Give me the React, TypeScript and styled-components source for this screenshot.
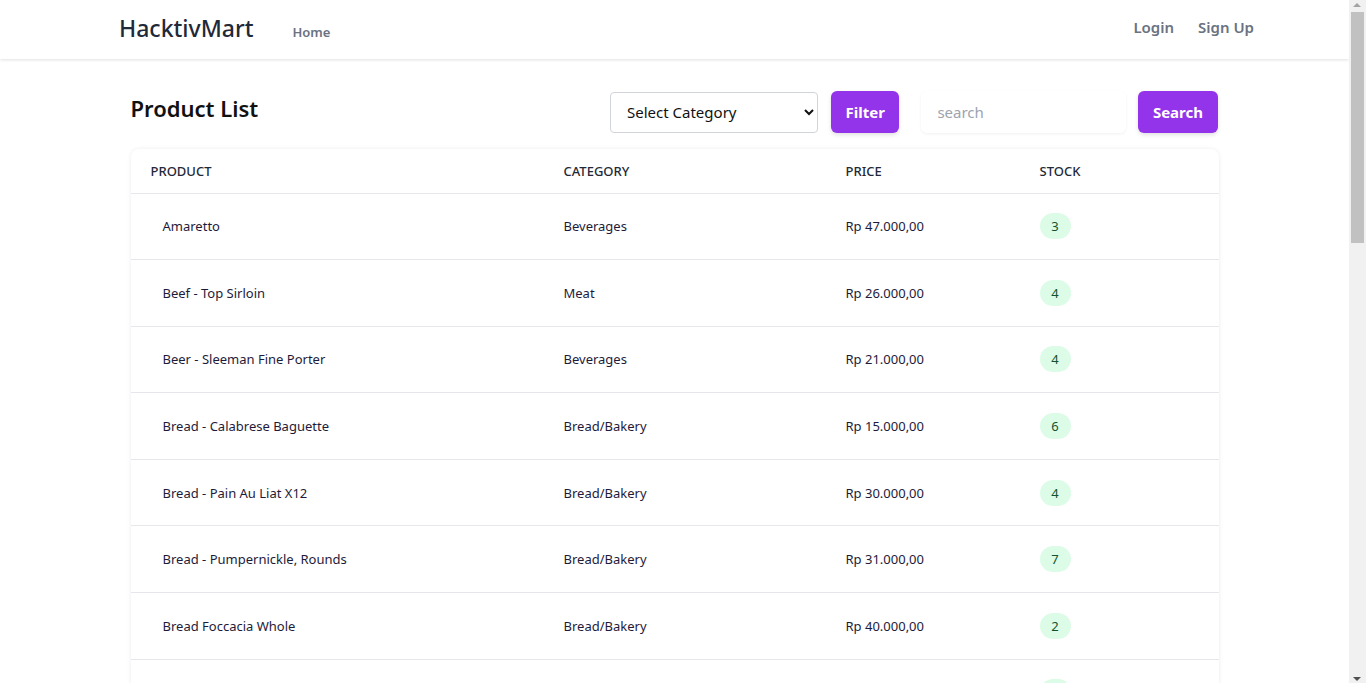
import styled, { createGlobalStyle } from 'styled-components';

const GlobalStyle = createGlobalStyle`
    html, body { overflow: hidden; }
    body {
        margin: 0;
        padding-right: 17px; /* room for the scrollbar drawn below */
        background: #ffffff;
        font-family: 'Noto Sans', 'Open Sans', sans-serif;
        color: #111827;
    }
    * { box-sizing: border-box; }
`;

const StyledScrollbar = styled.div`
    position: fixed;
    top: 0;
    right: 0;
    width: 17px;
    height: 100vh;
    background: #f1f1f1;
`;
const StyledThumb = styled.div`
    position: absolute;
    left: 2px;
    top: 12px;
    width: 13px;
    height: 231px;
    background: #c1c1c1;
`;
const StyledArrow = styled.div<{ $down?: boolean }>`
    position: absolute;
    left: 4px;
    width: 0;
    height: 0;
    border-left: 4.5px solid transparent;
    border-right: 4.5px solid transparent;
    ${(p) =>
        p.$down
            ? 'bottom: 2px; border-top: 4px solid #505050;'
            : 'top: 3px; border-bottom: 4px solid #a3a3a3;'}
`;

const StyledNav = styled.nav`
    height: 59px;
    background: #fff;
    box-shadow: 0 1px 3px rgba(0, 0, 0, 0.12);
    display: flex;
    align-items: center;
    padding: 0 95px 2px 119px;
`;
const StyledBrand = styled.a`
    font-size: 23px;
    font-weight: 500;
    color: #1f2937;
    text-decoration: none;
    margin-right: 39px;
    padding-bottom: 2px;
`;
const StyledNavLink = styled.a<{ $small?: boolean }>`
    font-size: ${(p) => (p.$small ? '13px' : '15px')};
    font-weight: 600;
    color: #6b7280;
    text-decoration: none;
    padding-top: ${(p) => (p.$small ? '6px' : '0')};
    padding-bottom: ${(p) => (p.$small ? '0' : '4px')};
`;
const StyledNavRight = styled.div`
    margin-left: auto;
    display: flex;
    gap: 24px;
`;

const StyledMain = styled.main`
    width: 1088px;
    margin: 0 auto;
    padding: 32px 0 40px;
`;
const StyledToolbar = styled.div`
    display: flex;
    align-items: center;
    padding-right: 1px;
    margin-bottom: 16px;
`;
const StyledH2 = styled.h2`
    margin: 0 auto 9px 0;
    font-size: 22px;
    font-weight: 600;
    color: #111;
`;
const StyledSelect = styled.select`
    width: 208px;
    height: 41px;
    border: 1px solid #d1d5db;
    border-radius: 4px;
    background: #fff;
    font-family: inherit;
    font-size: 15px;
    color: #111;
    padding: 0 8px 0 12px;
    margin-right: 13px;
`;
const StyledButton = styled.button`
    height: 42px;
    padding: 0 14.5px;
    border: none;
    border-radius: 6px;
    background: #9333ea;
    color: #fff;
    font-family: inherit;
    font-size: 15px;
    font-weight: 700;
    box-shadow: 0 2px 4px rgba(0, 0, 0, 0.12);
`;
const StyledInput = styled.input`
    width: 205px;
    height: 42px;
    margin: 0 12px 0 22px;
    border: none;
    border-radius: 6px;
    padding: 0 16px;
    font-family: inherit;
    font-size: 15px;
    box-shadow: 0 1px 3px rgba(0, 0, 0, 0.06);
    &::placeholder { color: #9ca3af; }
    &:focus { outline: none; }
`;
const StyledCard = styled.div`
    border-radius: 8px;
    background: #fff;
    box-shadow: 0 0 4px rgba(0, 0, 0, 0.08);
    overflow: hidden;
`;
const StyledTable = styled.table`
    width: 100%;
    border-collapse: collapse;
    table-layout: fixed;
`;
const StyledTh = styled.th<{ $w: number }>`
    width: ${(p) => p.$w}px;
    height: 44px;
    text-align: left;
    padding: 0 20px;
    font-size: 13px;
    font-weight: 500;
    color: #1f2937;
    border-bottom: 1px solid #e5e7eb;
`;
const StyledTr = styled.tr`
    border-bottom: 1px solid #e5e7eb;
`;
const StyledTd = styled.td<{ $indent?: boolean }>`
    height: 66.6px;
    padding: 0 20px 0 ${(p) => (p.$indent ? '32px' : '20px')};
    font-size: 13px;
    color: #1e1b3a;
`;
const StyledBadge = styled.span`
    display: inline-flex;
    align-items: center;
    justify-content: center;
    width: 31px;
    height: 26px;
    border-radius: 13px;
    background: #dcfce7;
    color: #14532d;
    font-size: 13px;
`;

const products = [
    ['Amaretto', 'Beverages', 'Rp 47.000,00', 3],
    ['Beef - Top Sirloin', 'Meat', 'Rp 26.000,00', 4],
    ['Beer - Sleeman Fine Porter', 'Beverages', 'Rp 21.000,00', 4],
    ['Bread - Calabrese Baguette', 'Bread/Bakery', 'Rp 15.000,00', 6],
    ['Bread - Pain Au Liat X12', 'Bread/Bakery', 'Rp 30.000,00', 4],
    ['Bread - Pumpernickle, Rounds', 'Bread/Bakery', 'Rp 31.000,00', 7],
    ['Bread Foccacia Whole', 'Bread/Bakery', 'Rp 40.000,00', 2],
    ['Bread - Raisin Walnut Oval', 'Bread/Bakery', 'Rp 22.000,00', 5],
    ['Cheese - Brie', 'Dairy', 'Rp 35.000,00', 3],
];

export default function App() {
    return (
        <>
            <GlobalStyle />
            <StyledNav>
                <StyledBrand href="#">HacktivMart</StyledBrand>
                <StyledNavLink $small href="#">Home</StyledNavLink>
                <StyledNavRight>
                    <StyledNavLink href="#">Login</StyledNavLink>
                    <StyledNavLink href="#">Sign Up</StyledNavLink>
                </StyledNavRight>
            </StyledNav>
            <StyledMain>
                <StyledToolbar>
                    <StyledH2>Product List</StyledH2>
                    <StyledSelect defaultValue="">
                        <option value="">Select Category</option>
                        <option>Beverages</option>
                        <option>Meat</option>
                        <option>Bread/Bakery</option>
                    </StyledSelect>
                    <StyledButton>Filter</StyledButton>
                    <StyledInput placeholder="search" />
                    <StyledButton>Search</StyledButton>
                </StyledToolbar>
                <StyledCard>
                    <StyledTable>
                        <thead>
                            <tr>
                                <StyledTh $w={413}>PRODUCT</StyledTh>
                                <StyledTh $w={282}>CATEGORY</StyledTh>
                                <StyledTh $w={194}>PRICE</StyledTh>
                                <StyledTh $w={199}>STOCK</StyledTh>
                            </tr>
                        </thead>
                        <tbody>
                            {products.map(([name, cat, price, stock]) => (
                                <StyledTr key={name as string}>
                                    <StyledTd $indent>{name}</StyledTd>
                                    <StyledTd>{cat}</StyledTd>
                                    <StyledTd>{price}</StyledTd>
                                    <StyledTd><StyledBadge>{stock}</StyledBadge></StyledTd>
                                </StyledTr>
                            ))}
                        </tbody>
                    </StyledTable>
                </StyledCard>
            </StyledMain>
            <StyledScrollbar>
                <StyledArrow />
                <StyledThumb />
                <StyledArrow $down />
            </StyledScrollbar>
        </>
    );
}
